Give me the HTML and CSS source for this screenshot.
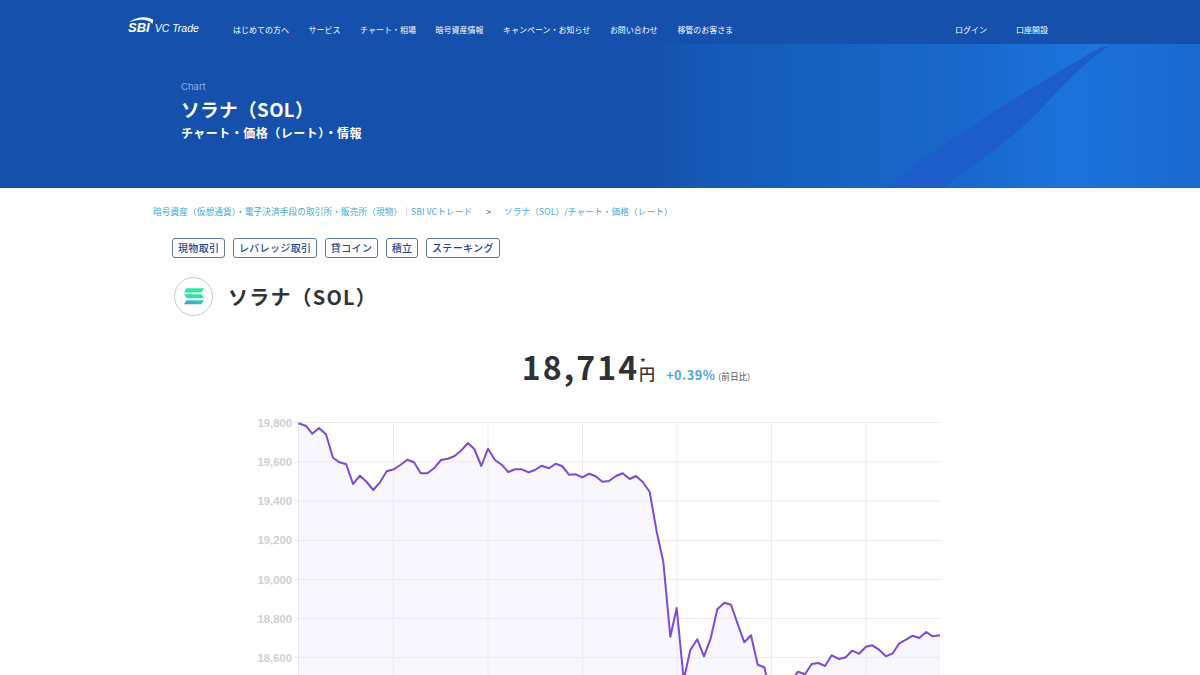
FILE: index.html
```html
<!DOCTYPE html>
<html lang="ja">
<head>
    <meta charset="UTF-8">
    <meta name="viewport" content="width=device-width, initial-scale=1.0">
    <title>ソラナ（SOL）チャート・価格（レート）・情報</title>
    <link rel="stylesheet" href="styles.css">
</head>
<body>

<section class="hero">
    <svg class="hero-swoosh" viewBox="0 0 1200 188" preserveAspectRatio="none" aria-hidden="true">
        <path d="M886 188C950 135 1030 90 1082 58C1090 52 1100 47 1112 44C1085 62 1068 80 1040 110C1000 150 965 170 944 188Z" fill="#1c5ccb"/>
        <path d="M1080 60C1090 52 1100 47 1112 44L1090 44C1085 50 1082 55 1080 60Z" fill="#2074da"/>
    </svg>
    <header class="site-header">
        <a class="logo" href="#">
            <svg class="logo-arc" viewBox="0 0 30 12" aria-hidden="true">
                <path d="M1 7C8 1 20 -1 28 4C28 5 27.500 7 27 9C26 5 14 1 1 7Z" fill="#fff"/>
            </svg>
            <span class="logo-sbi">SBI</span>
            <span class="logo-vc">VC Trade</span>
        </a>
        <nav class="main-nav">
            <a href="#">はじめての方へ</a>
            <a href="#">サービス</a>
            <a href="#">チャート・相場</a>
            <a href="#">暗号資産情報</a>
            <a href="#">キャンペーン・お知らせ</a>
            <a href="#">お問い合わせ</a>
            <a href="#">移管のお客さま</a>
        </nav>
        <nav class="user-nav">
            <a href="#">ログイン</a>
            <a href="#">口座開設</a>
        </nav>
    </header>
    <div class="hero-text">
        <p class="hero-label">Chart</p>
        <h1>ソラナ（SOL）</h1>
        <p class="hero-sub">チャート・価格（レート）・情報</p>
    </div>
</section>

<div class="breadcrumb">
    <a href="#">暗号資産（仮想通貨）・電子決済手段の取引所・販売所（現物）｜SBI VCトレード</a>
    <span class="breadcrumb-sep">&gt;</span>
    <a href="#">ソラナ（SOL）/チャート・価格（レート）</a>
</div>

<div class="tags">
    <a class="tag" href="#">現物取引</a>
    <a class="tag" href="#">レバレッジ取引</a>
    <a class="tag" href="#">貸コイン</a>
    <a class="tag" href="#">積立</a>
    <a class="tag" href="#">ステーキング</a>
</div>

<div class="coin-title">
    <span class="coin-icon">
        <svg viewBox="0 0 24 20" width="22" height="19" aria-hidden="true">
            <defs>
                <linearGradient id="solBottom" x1="0" y1="1" x2="1" y2="0">
                    <stop offset="0" stop-color="#4f93d8"/>
                    <stop offset="1" stop-color="#30dcb0"/>
                </linearGradient>
            </defs>
            <path d="M4 1H23L20 5.500H1Z" fill="#2ee89f"/>
            <path d="M1 7.500H20L23 12H4Z" fill="#2fe0a8"/>
            <path d="M4 14H23L20 18.500H1Z" fill="url(#solBottom)"/>
        </svg>
    </span>
    <h2>ソラナ（SOL）</h2>
</div>

<div class="price-row">
    <span class="price">18,714</span>
    <span class="price-unit"><small>*</small>円</span>
    <span class="price-change">+0.39%</span>
    <span class="price-note">(前日比)</span>
</div>

<!-- viewBox uses page coordinates so the points read the same as the reference -->
<svg class="chart" viewBox="250 410 700 320" aria-label="SOL chart">
    <polygon class="chart-area" points="298.500,423.300 305.700,425.700 312.300,433.700 319,428 326,434.300 333,457.700 339.300,462.300 346.300,464.300 353,484 360,475.700 366.700,482 373.300,490 380,482.300 386.700,471.300 393.700,469.300 400.300,465 407.300,459.700 414,462.300 420.700,473.300 427.300,473.300 434,468.300 441,460 447.700,458.700 454.300,456.300 461,450.700 468,443 474.300,449 481.300,466 488,448.700 495,460 501.700,464.700 508.300,472 515,469.300 521.700,469.300 528.700,472.300 535,470 541.700,465.700 549,468.300 555.700,463.700 562,466 569,474.700 575.700,474.300 582.300,477.300 589.300,473.700 595.700,476.300 602.300,481.700 609,481 616,476 622.700,473.300 629.700,479 636,476 643,482.300 649.700,492 656.700,531.700 663.300,561.700 670.300,636.700 676.700,608 683.700,680 690.300,650 697.300,639.300 704,656.300 710.700,638.300 717.300,609.300 724.300,602.700 731,604.700 737.700,624 744.300,642.300 751,635.300 757.700,664.700 764.300,667.300 771,695 778,700 785,695 792,680 798,671.700 805,674.300 811.700,664 818.300,663 825,666 831.700,655.300 839,659 845.700,657.300 852,650.700 859,653.700 866,646.700 872.300,645.300 879,649.700 886,656.300 892.700,653.300 899.300,643.300 906,639.700 912.700,635.700 919.300,638 926.300,632 932.700,636.300 940,635.300 940,730 298.500,730"/>
    <g class="grid">
        <line x1="294" x2="940" y1="422.500" y2="422.500"/>
        <line x1="294" x2="940" y1="462" y2="462"/>
        <line x1="294" x2="940" y1="501" y2="501"/>
        <line x1="294" x2="940" y1="540.500" y2="540.500"/>
        <line x1="294" x2="940" y1="579.500" y2="579.500"/>
        <line x1="294" x2="940" y1="618.500" y2="618.500"/>
        <line x1="294" x2="940" y1="657.500" y2="657.500"/>
        <line class="grid-axis" x1="298.500" x2="298.500" y1="422" y2="730"/>
        <line x1="393.500" x2="393.500" y1="422" y2="730"/>
        <line x1="488" x2="488" y1="422" y2="730"/>
        <line x1="582.500" x2="582.500" y1="422" y2="730"/>
        <line x1="677" x2="677" y1="422" y2="730"/>
        <line x1="771.500" x2="771.500" y1="422" y2="730"/>
        <line x1="866" x2="866" y1="422" y2="730"/>
    </g>
    <g class="chart-labels">
        <text x="292" y="427">19,800</text>
        <text x="292" y="466">19,600</text>
        <text x="292" y="505">19,400</text>
        <text x="292" y="544">19,200</text>
        <text x="292" y="584">19,000</text>
        <text x="292" y="623">18,800</text>
        <text x="292" y="662">18,600</text>
    </g>
    <polyline class="chart-line" points="298.500,423.300 305.700,425.700 312.300,433.700 319,428 326,434.300 333,457.700 339.300,462.300 346.300,464.300 353,484 360,475.700 366.700,482 373.300,490 380,482.300 386.700,471.300 393.700,469.300 400.300,465 407.300,459.700 414,462.300 420.700,473.300 427.300,473.300 434,468.300 441,460 447.700,458.700 454.300,456.300 461,450.700 468,443 474.300,449 481.300,466 488,448.700 495,460 501.700,464.700 508.300,472 515,469.300 521.700,469.300 528.700,472.300 535,470 541.700,465.700 549,468.300 555.700,463.700 562,466 569,474.700 575.700,474.300 582.300,477.300 589.300,473.700 595.700,476.300 602.300,481.700 609,481 616,476 622.700,473.300 629.700,479 636,476 643,482.300 649.700,492 656.700,531.700 663.300,561.700 670.300,636.700 676.700,608 683.700,680 690.300,650 697.300,639.300 704,656.300 710.700,638.300 717.300,609.300 724.300,602.700 731,604.700 737.700,624 744.300,642.300 751,635.300 757.700,664.700 764.300,667.300 771,695 778,700 785,695 792,680 798,671.700 805,674.300 811.700,664 818.300,663 825,666 831.700,655.300 839,659 845.700,657.300 852,650.700 859,653.700 866,646.700 872.300,645.300 879,649.700 886,656.300 892.700,653.300 899.300,643.300 906,639.700 912.700,635.700 919.300,638 926.300,632 932.700,636.300 940,635.300"/>
</svg>

</body>
</html>
```

FILE: styles.css
```css
body {
    margin: 0;
    font-family: "Noto Sans CJK JP", "Noto Sans", sans-serif;
    background-color: #fff;
    color: #333;
}
a {
    color: inherit;
    text-decoration: none;
}
.hero {
    position: relative;
    height: 188px;
    background: linear-gradient(90deg, #1450ac 0%, #1450ac 54%, #1559b4 58%, #1560bd 66%, #1866c8 78%, #1b72db 89%, #1a6ad0 100%);
    color: #fff;
}
.hero-swoosh {
    position: absolute;
    left: 0;
    top: 0;
    width: 100%;
    height: 100%;
}
.site-header {
    position: relative;
    display: flex;
    align-items: center;
    height: 44px;
    padding: 14px 152px 0 128px;
    background-color: #1450ac;
    font-size: 8px;
    box-sizing: border-box;
}
.logo {
    position: relative;
    display: flex;
    align-items: baseline;
    width: 105px;
    padding-bottom: 4px;
    font-family: "Liberation Sans", sans-serif;
    font-style: italic;
}
.logo-arc {
    position: absolute;
    left: 0;
    top: -4px;
    width: 27px;
    height: 11px;
}
.logo-sbi {
    font-size: 13px;
    font-weight: bold;
    margin-right: 5px;
}
.logo-vc {
    font-size: 10.500px;
}
.main-nav {
    display: flex;
    gap: 19.500px;
}
.user-nav {
    display: flex;
    gap: 29px;
    margin-left: auto;
}
.hero-text {
    position: relative;
    padding: 36px 0 0 181px;
}
.hero-label {
    margin: 0;
    font-family: "Inter", sans-serif;
    font-size: 9.500px;
    line-height: 14px;
    color: #8fb1e2;
}
.hero-text h1 {
    margin: 1px 0 0;
    font-size: 18.670px;
    font-weight: 700;
    line-height: 27px;
    letter-spacing: 0.02em;
}
.hero-sub {
    margin: 2px 0 0;
    font-size: 12px;
    font-weight: 700;
    line-height: 18px;
    letter-spacing: 0.04em;
}
.breadcrumb {
    display: flex;
    align-items: center;
    padding: 17px 0 0 153px;
    font-size: 8.670px;
    line-height: 13px;
    letter-spacing: 0.01em;
    color: #4aa7cf;
}
.breadcrumb-sep {
    margin: 0 13px 0 14px;
    color: #444;
}
.tags {
    display: flex;
    gap: 7.500px;
    padding: 20px 0 0 172px;
}
.tag {
    padding: 0 5px;
    border: 1px solid #5f79ab;
    border-radius: 3px;
    font-size: 10px;
    font-weight: 500;
    line-height: 18px;
    color: #1c4a8f;
    letter-spacing: 0.035em;
}
.coin-title {
    display: flex;
    align-items: center;
    gap: 15px;
    padding: 19px 0 0 174px;
}
.coin-icon {
    display: flex;
    align-items: center;
    justify-content: center;
    width: 37px;
    height: 37px;
    border: 1px solid #c8c8c8;
    border-radius: 50%;
}
.coin-title h2 {
    margin: 0;
    font-size: 20px;
    font-weight: 700;
    letter-spacing: 0.06em;
    color: #333;
}
.price-row {
    display: flex;
    align-items: baseline;
    justify-content: center;
    height: 46px;
    padding: 27px 0 0 72px;
    color: #2e3136;
}
.price {
    font-size: 32px;
    font-weight: 700;
    letter-spacing: 0.065em;
}
.price-unit {
    position: relative;
    font-size: 16px;
    font-weight: 500;
    margin-right: 11px;
}
.price-unit small {
    position: absolute;
    left: 1px;
    top: -8px;
    font-size: 12px;
}
.price-change {
    font-size: 12.670px;
    font-weight: 700;
    letter-spacing: 0.04em;
    color: #4fa6e6;
    margin-right: 3px;
}
.price-note {
    font-size: 8.670px;
    color: #555;
}
.chart {
    display: block;
    width: 700px;
    height: 320px;
    margin: 21px 0 0 250px;
}
.grid line {
    stroke: #ebe9f1;
    stroke-width: 1;
}
.grid .grid-axis {
    stroke: #e3e1ea;
}
.chart-labels text {
    font-family: "Liberation Sans", sans-serif;
    font-size: 11.300px;
    font-weight: bold;
    fill: #cfcfcf;
    text-anchor: end;
}
.chart-area {
    fill: #f9f7fe;
}
.chart-line {
    fill: none;
    stroke: #7d4bd6;
    stroke-width: 2;
    stroke-linejoin: round;
}
```
